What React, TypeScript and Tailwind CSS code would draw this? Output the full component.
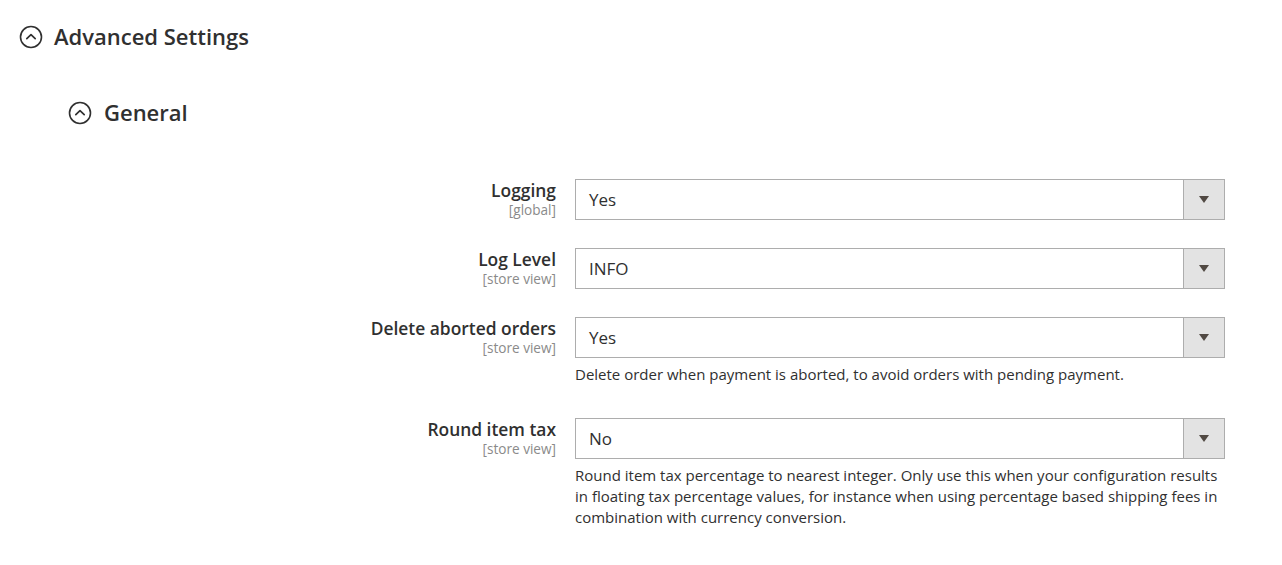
import { ReactNode } from "react";

const CollapseIcon = () => (
  <svg width="24" height="24" viewBox="0 0 24 24" fill="none" className="shrink-0">
    <circle cx="12" cy="12" r="10.5" stroke="#303030" strokeWidth="1.6" />
    <path d="M7.8 13.6 L12 9.6 L16.2 13.6" stroke="#303030" strokeWidth="1.7" strokeLinecap="round" strokeLinejoin="round" />
  </svg>
);

type Row = {
  label: string;
  scope: string;
  value: string;
  note?: ReactNode;
};

const rows: Row[] = [
  { label: "Logging", scope: "[global]", value: "Yes" },
  { label: "Log Level", scope: "[store view]", value: "INFO" },
  {
    label: "Delete aborted orders",
    scope: "[store view]",
    value: "Yes",
    note: "Delete order when payment is aborted, to avoid orders with pending payment.",
  },
  {
    label: "Round item tax",
    scope: "[store view]",
    value: "No",
    note: "Round item tax percentage to nearest integer. Only use this when your configuration results in floating tax percentage values, for instance when using percentage based shipping fees in combination with currency conversion.",
  },
];

const Select = ({ value }: { value: string }) => (
  <div className="flex h-[41px] w-[650px] border border-[#adadad] bg-white">
    <div className="flex flex-1 items-center pl-[13px] text-[17px] text-[#303030]">{value}</div>
    <div className="flex w-[41px] items-center justify-center border-l border-[#adadad] bg-[#e3e3e3]">
      <svg width="10" height="7" viewBox="0 0 10 7">
        <path d="M0 0 H10 L5 7 Z" fill="#514943" />
      </svg>
    </div>
  </div>
);

export default function App() {
  return (
    <div
      className="min-h-[565px] w-[1282px] bg-white pl-[19px] pt-[23px] text-[#303030]"
      style={{ fontFamily: '"Open Sans", "Liberation Sans", sans-serif' }}
    >
      <div className="flex items-center gap-[11px]">
        <CollapseIcon />
        <h2 className="text-[22px] font-semibold leading-[28px] -translate-y-[1px]">Advanced Settings</h2>
      </div>

      <div className="ml-[49px] mt-[48px] flex items-center gap-[12px]">
        <CollapseIcon />
        <h3 className="text-[22px] font-semibold leading-[28px] -translate-y-[1px]">General</h3>
      </div>

      <div className="mt-[52px] flex flex-col gap-[28px]">
        {rows.map((r) => (
          <div key={r.label} className="flex gap-[19px]">
            <div className="w-[537px] pt-[1px] text-right">
              <div className="text-[17.4px] font-semibold leading-[21px]">{r.label}</div>
              <div className="text-[13.6px] leading-[18px] text-[#8a8a8a]">{r.scope}</div>
            </div>
            <div className="flex flex-col">
              <Select value={r.value} />
              {r.note && (
                <p className="mb-[5px] mt-[6px] w-[650px] text-[15px] leading-[21px] text-[#303030]">
                  {r.note}
                </p>
              )}
            </div>
          </div>
        ))}
      </div>
    </div>
  );
}
